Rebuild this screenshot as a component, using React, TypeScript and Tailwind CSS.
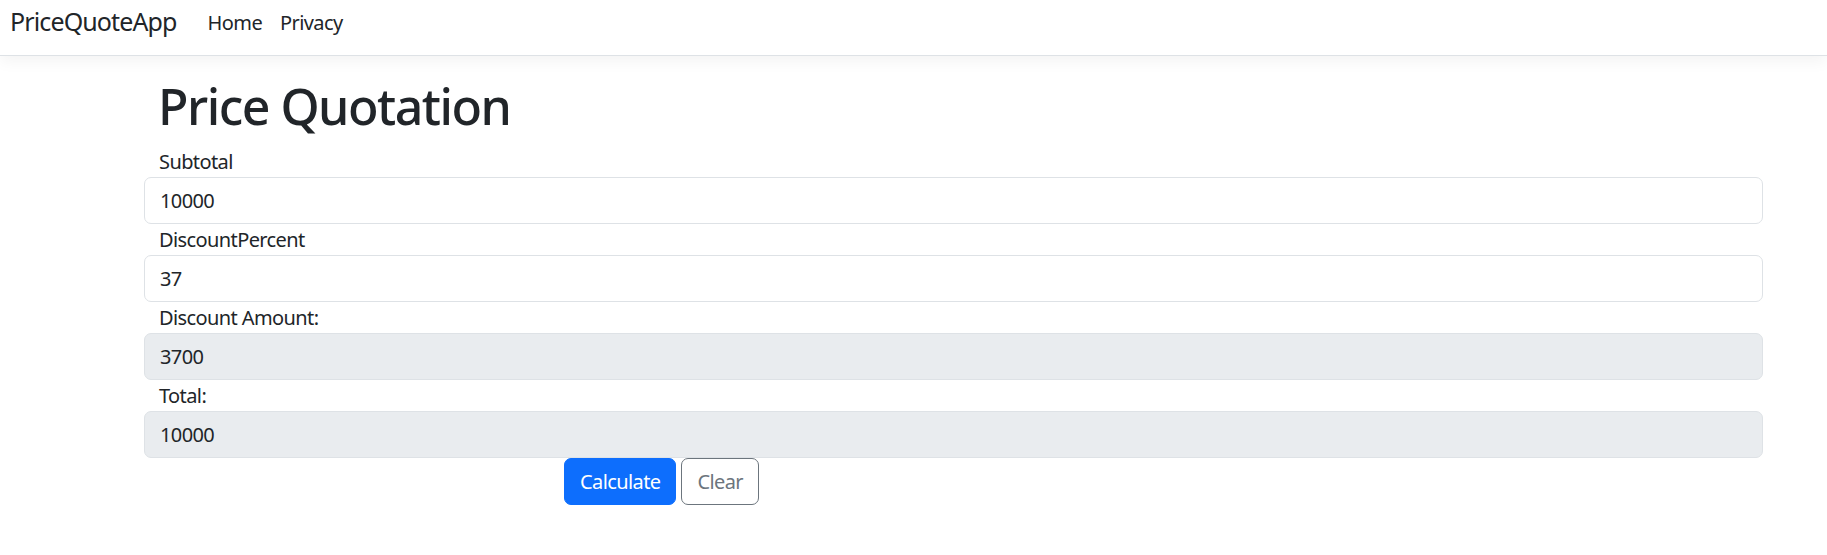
import React from "react";

const font = { fontFamily: '"Noto Sans", "Open Sans", sans-serif' };

function Field({ label, value, disabled }: { label: string; value: string; disabled?: boolean }) {
  return (
    <div>
      <div className="h-[31px] pt-[1px] pl-[15px] text-[20px] leading-[30px] tracking-[-0.03em] text-[#212529]">{label}</div>
      <input
        readOnly
        value={value}
        className={
          "block w-full h-[47px] rounded-[7px] border border-[#dee2e6] px-[15px] text-[20px] leading-[30px] tracking-[-0.03em] text-[#212529] outline-none " +
          (disabled ? "bg-[#e9ecef]" : "bg-white")
        }
        style={font}
      />
    </div>
  );
}

export default function App() {
  return (
    <div className="min-h-[555px] bg-white text-[#212529]" style={font}>
      <nav className="h-[56px] flex items-start pl-[10px] bg-white border-b border-[#dee2e6] shadow-[0_5px_15px_rgba(0,0,0,0.05)]">
        <span className="mt-[6px] text-[25px] leading-[30px] tracking-[-0.035em] text-[#212529] mr-[31px]">PriceQuoteApp</span>
        <span className="mt-[8px] text-[20px] leading-[30px] tracking-[-0.03em] text-[#212529] mr-[18px]">Home</span>
        <span className="mt-[8px] text-[20px] leading-[30px] tracking-[-0.03em] text-[#212529]">Privacy</span>
      </nav>
      <main className="pt-[20px] pl-[144px]">
        <div className="w-[1619px]">
          <h1 className="h-[60px] mb-[10px] pl-[14px] text-[50px] leading-[60px] font-[550] tracking-[-0.03em] text-[#212529]">Price Quotation</h1>
          <Field label="Subtotal" value="10000" />
          <Field label="DiscountPercent" value="37" />
          <Field label="Discount Amount:" value="3700" disabled />
          <Field label="Total:" value="10000" disabled />
          <div className="flex gap-[5px] pl-[420px]">
            <button className="h-[47px] px-[15px] rounded-[7px] bg-[#0d6efd] border border-[#0d6efd] text-white text-[20px] leading-[30px] tracking-[-0.03em]">Calculate</button>
            <button className="h-[47px] px-[15px] rounded-[7px] bg-white border border-[#6c757d] text-[#6c757d] text-[20px] leading-[30px] tracking-[-0.03em]">Clear</button>
          </div>
        </div>
      </main>
    </div>
  );
}
